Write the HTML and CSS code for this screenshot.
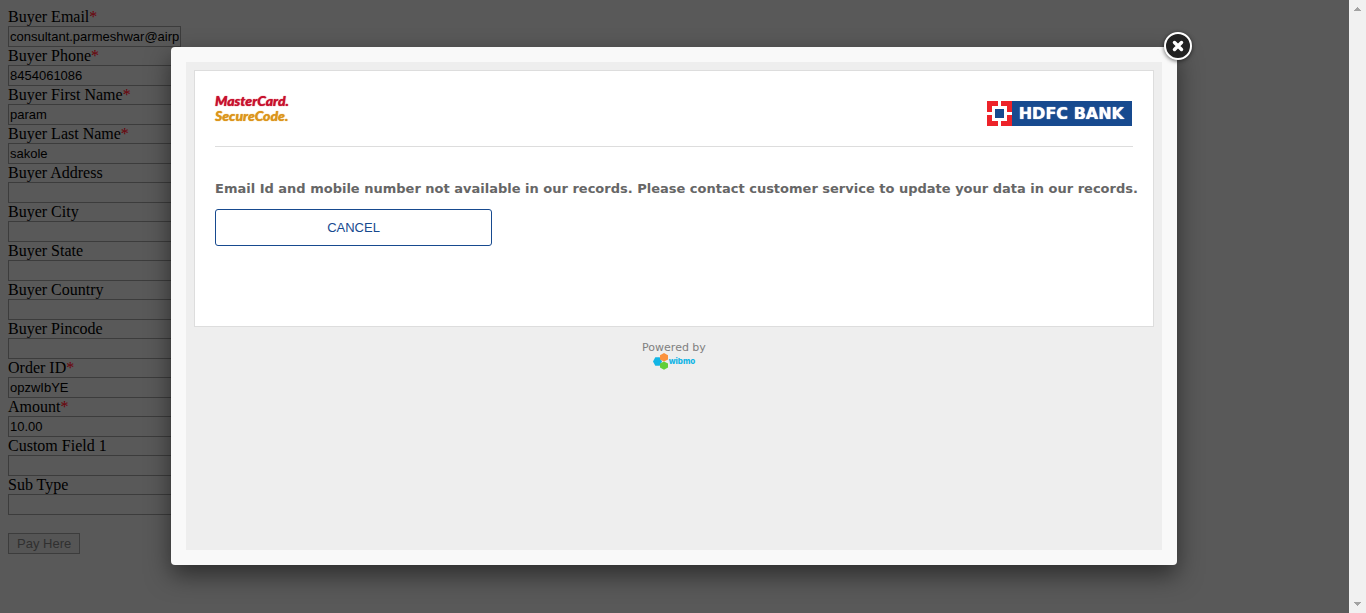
FILE: index.html
```html
<!DOCTYPE html>
<html lang="en">
<head>
<meta charset="utf-8">
<title>Payment</title>
<link rel="stylesheet" href="styles.css">
</head>
<body>
<div class="page">
  <form class="buyer-form">
    <label for="email">Buyer Email<span class="required">*</span></label>
    <input id="email" type="text" value="consultant.parmeshwar@airpay.co.in">
    <label for="phone">Buyer Phone<span class="required">*</span></label>
    <input id="phone" type="text" value="8454061086">
    <label for="first">Buyer First Name<span class="required">*</span></label>
    <input id="first" type="text" value="param">
    <label for="last">Buyer Last Name<span class="required">*</span></label>
    <input id="last" type="text" value="sakole">
    <label for="address">Buyer Address</label>
    <input id="address" type="text">
    <label for="city">Buyer City</label>
    <input id="city" type="text">
    <label for="state">Buyer State</label>
    <input id="state" type="text">
    <label for="country">Buyer Country</label>
    <input id="country" type="text">
    <label for="pincode">Buyer Pincode</label>
    <input id="pincode" type="text">
    <label for="order">Order ID<span class="required">*</span></label>
    <input id="order" type="text" value="opzwIbYE">
    <label for="amount">Amount<span class="required">*</span></label>
    <input id="amount" type="text" value="10.00">
    <label for="custom">Custom Field 1</label>
    <input id="custom" type="text">
    <label for="subtype">Sub Type</label>
    <input id="subtype" type="text">
    <button class="pay" type="button" disabled>Pay Here</button>
  </form>
  <div class="overlay">
    <div class="modal" role="dialog" aria-label="Card verification">
      <button class="close" type="button" aria-label="Close">
        <svg width="32" height="32" viewBox="0 0 32 32" aria-hidden="true">
          <circle cx="16" cy="16" r="13" fill="#222" stroke="#fff" stroke-width="2"/>
          <path d="M12.500 12.500l7 7M19.500 12.500l-7 7" stroke="#fff" stroke-width="3.500" stroke-linecap="round"/>
        </svg>
      </button>
      <div class="frame">
        <main class="card">
          <header class="brands">
            <div class="mastercard"><span class="mc-name">MasterCard.</span><span class="mc-code">SecureCode.</span></div>
            <div class="hdfc">
              <svg width="25" height="25" viewBox="0 0 25 25" aria-hidden="true">
                <path fill="#ed232a" d="M0 0h25v25H0z"/>
                <path fill="#fff" d="M11 0h3v5h6v6h5v3h-5v6h-6v5h-3v-5H5v-6H0v-3h5V5h6z"/>
                <path fill="#174a8f" d="M8 8h9v9H8z"/>
              </svg>
              <span>HDFC BANK</span>
            </div>
          </header>
          <p class="message">Email Id and mobile number not available in our records. Please contact customer service to update your data in our records.</p>
          <button class="cancel" type="button">CANCEL</button>
        </main>
        <footer class="powered">
          <div>Powered by</div>
          <div class="wibmo">
            <svg width="16" height="17" viewBox="0 0 16 17" aria-hidden="true">
              <path fill="#12b5e5" d="M2.300 4.300h4.400l2.300 4.200-2.300 4.200H2.300L0 8.500z"/>
              <path fill="#fb913c" d="M11 0l4 2.200v4.200l-4 2.200-4-2.200V2.200z"/>
              <path fill="#62cf39" d="M11 8.400l4 2.200v4l-4 2.200-4-2.200v-4z"/>
            </svg>
            <span>wibmo</span>
          </div>
        </footer>
      </div>
    </div>
  </div>
</div>
<div class="scrollbar" aria-hidden="true">
  <svg width="7" height="4" viewBox="0 0 7 4"><path fill="#a3a3a3" d="M3 0h1v1h1v1h1v1h1v1H0V3h1V2h1V1h1z"/></svg>
  <svg width="7" height="4" viewBox="0 0 7 4"><path fill="#a3a3a3" d="M0 0h7v1H6v1H5v1H4v1H3V3H2V2H1V1H0z"/></svg>
</div>
</body>
</html>
```
FILE: styles.css
```css
* { box-sizing: border-box; }

body {
  display: flex;
  min-height: 100vh;
  margin: 0;
  background: #595959;
}

.page {
  position: relative;
  flex: 1;
  min-width: 0;
}

.buyer-form {
  display: flex;
  flex-direction: column;
  align-items: flex-start;
  padding: 8px;
  font: 16px/18px "Liberation Serif", serif;
  color: #000;
}

.required { color: #6c0008; }

.buyer-form input {
  width: 173px;
  height: 21px;
  padding: 1px;
  border: 1px solid #3c3c3c;
  background: #595959;
  color: #000;
  font: 13px "Liberation Sans", sans-serif;
}

.pay {
  height: 21px;
  margin-top: 18px;
  padding: 0 8px;
  border: 1px solid #3c3c3c;
  background: #555;
  color: #303030;
  font: 13px "Liberation Sans", sans-serif;
}

.overlay {
  position: absolute;
  inset: 0;
  display: flex;
  padding: 47px 172px 48px 171px;
}

.modal {
  position: relative;
  flex: 1;
  display: flex;
  padding: 15px;
  border-radius: 4px;
  background: #f9f9f9;
  box-shadow: 0 10px 25px rgba(0, 0, 0, 0.5);
}

.close {
  position: absolute;
  top: -17px;
  right: -17px;
  padding: 0;
  border: 0;
  background: none;
  filter: drop-shadow(0 1px 2px rgba(0, 0, 0, 0.6));
}

.close svg { display: block; }

.frame {
  flex: 1;
  padding: 8px;
  background: #eee;
}

.card {
  min-height: 257px;
  padding: 20px;
  border: 1px solid #ddd;
  background: #fff;
}

.brands {
  display: flex;
  justify-content: space-between;
  align-items: flex-start;
  height: 56px;
  border-bottom: 1px solid #ddd;
}

.mastercard {
  display: flex;
  flex-direction: column;
  padding-top: 2px;
  font: italic 900 14px/15px Lato, sans-serif;
  text-shadow: 0 0 1px currentColor;
}

.mc-name { color: #c8102e; }
.mc-code { color: #dc951b; }

.hdfc {
  display: flex;
  align-items: center;
  gap: 7px;
  margin-top: 10px;
  margin-right: 1px;
  padding-right: 8px;
  background: #174a8f;
  color: #fff;
  font: bold 16px/25px "DejaVu Sans", sans-serif;
  text-shadow: 0 0 1px #fff;
}

.message {
  margin: 33px -8px 12px 0;
  color: #666;
  font: bold 13px/17px "DejaVu Sans", sans-serif;
}

.cancel {
  width: 277px;
  height: 37px;
  border: 1px solid #174a8f;
  border-radius: 3px;
  background: #fff;
  color: #174a8f;
  font: 13px "Liberation Sans", sans-serif;
}

.powered {
  display: flex;
  flex-direction: column;
  align-items: center;
  padding-top: 15px;
  color: #808080;
  font: 11px/11px "DejaVu Sans", sans-serif;
}

.wibmo {
  display: flex;
  align-items: center;
  color: #12b5e5;
  font: 800 8px/14px Inter, sans-serif;
}

.wibmo span { padding-bottom: 2px; }

.scrollbar {
  display: flex;
  flex-direction: column;
  justify-content: space-between;
  align-items: center;
  width: 17px;
  padding: 7px 0;
  background: #f1f1f1;
}
```
